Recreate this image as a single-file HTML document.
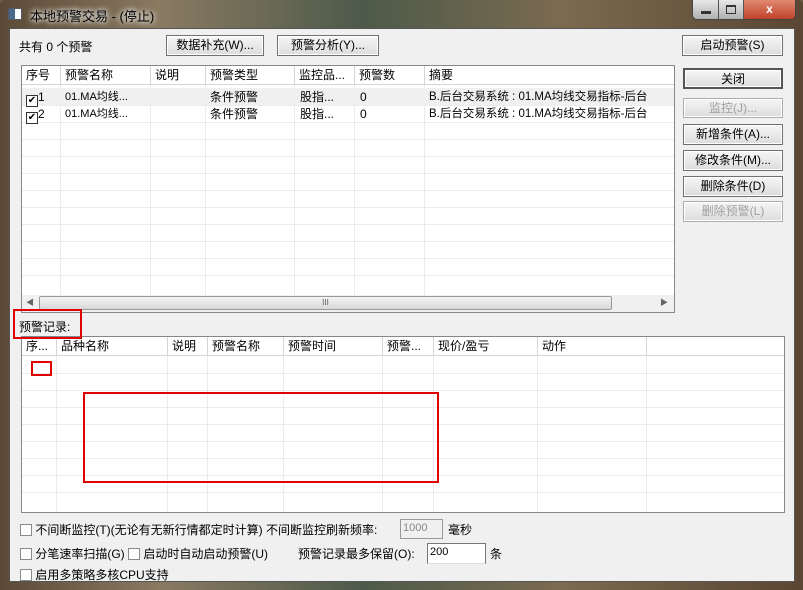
<!DOCTYPE html>
<html><head><meta charset="utf-8"><style>
*{box-sizing:border-box;margin:0;padding:0}
body{width:803px;height:590px;overflow:hidden;background:#6b5a44;font-family:"Liberation Sans","Noto Sans CJK SC",sans-serif;font-size:12px;color:#000;position:relative}
.a{position:absolute}
.frame{left:0;top:0;width:803px;height:590px;background:linear-gradient(90deg,#5b4a36,#8a7a62 20%,#4d5a4a 45%,#7b6a50 70%,#5a4632);border-radius:6px 6px 0 0}
.title{left:30px;top:6px;font-size:13px;color:#000;text-shadow:0 0 6px #fff,0 0 6px #fff}
.client{left:9px;top:28px;width:786px;height:554px;background:#f0f0f0;border:1px solid #555}
.btn{position:absolute;background:linear-gradient(#f6f6f6,#dcdcdc);border:1px solid #707070;box-shadow:inset 0 0 0 1px #fff;text-align:center;line-height:18px;font-size:12px}
.dis{color:#a0a0a0;border-color:#adadad}
.list{background:#fff;border:1px solid #828790}
.hd{position:absolute;top:0;height:19px;line-height:18px;border-right:1px solid #d5d5d5;padding-left:4px;white-space:nowrap;overflow:hidden;border-bottom:1px solid #d5d5d5}
.row{position:absolute;left:0;height:17px;line-height:17px;white-space:nowrap}
.vl{position:absolute;top:19px;bottom:0;width:1px;background:#ececec}
.hl{position:absolute;left:0;right:0;height:1px;background:#ececec}
.cb{display:inline-block;width:12px;height:12px;border:1px solid #8a8a8a;background:#fff;vertical-align:-2px}
.red{position:absolute;border:2px solid #e00000}
</style></head><body>
<div class="a frame"></div>
<div class="a" style="left:8px;top:8px;width:14px;height:12px;background:#fff;border:1px solid #556"><div style="width:6px;height:10px;background:#4a6a8a"></div></div>
<div class="a title">本地预警交易 - (停止)</div>
<div class="a" style="left:692px;top:0;width:104px;height:20px;border:1px solid #444;border-top:none;border-radius:0 0 5px 5px;overflow:hidden;display:flex">
<div style="width:26px;background:linear-gradient(#e8e8e8,#b0b0b0);border-right:1px solid #555;position:relative"><div style="position:absolute;left:8px;top:11px;width:10px;height:3px;background:#333"></div></div>
<div style="width:25px;background:linear-gradient(#e8e8e8,#b0b0b0);border-right:1px solid #555;position:relative"><div style="position:absolute;left:7px;top:5px;width:10px;height:9px;border:1px solid #333;border-top-width:2px"></div></div>
<div style="flex:1;background:linear-gradient(#e08a70,#c0402a);color:#fff;text-align:center;font-weight:bold;line-height:18px">x</div></div>
<div class="a client"></div>
<div class="a" style="left:19px;top:38px">共有 0 个预警</div>
<div class="btn" style="left:166px;top:35px;width:98px;height:21px">数据补充(W)...</div>
<div class="btn" style="left:277px;top:35px;width:102px;height:21px">预警分析(Y)...</div>
<div class="btn" style="left:682px;top:35px;width:101px;height:21px">启动预警(S)</div>
<div class="btn" style="left:683px;top:68px;width:100px;height:21px;border:2px solid #555">关闭</div>
<div class="btn dis" style="left:683px;top:98px;width:100px;height:20px">监控(J)...</div>
<div class="btn" style="left:683px;top:124px;width:100px;height:21px">新增条件(A)...</div>
<div class="btn" style="left:683px;top:150px;width:100px;height:21px">修改条件(M)...</div>
<div class="btn" style="left:683px;top:176px;width:100px;height:21px">删除条件(D)</div>
<div class="btn dis" style="left:683px;top:201px;width:100px;height:21px">删除预警(L)</div>

<div class="a list" style="left:21px;top:65px;width:654px;height:248px;overflow:hidden">
<div class="hd" style="left:0;width:39px">序号</div>
<div class="hd" style="left:39px;width:90px">预警名称</div>
<div class="hd" style="left:129px;width:55px">说明</div>
<div class="hd" style="left:184px;width:89px">预警类型</div>
<div class="hd" style="left:273px;width:60px">监控品...</div>
<div class="hd" style="left:333px;width:70px">预警数</div>
<div class="hd" style="left:403px;width:251px;border-right:none">摘要</div>
<div class="vl" style="left:38px"></div><div class="vl" style="left:128px"></div><div class="vl" style="left:183px"></div><div class="vl" style="left:272px"></div><div class="vl" style="left:332px"></div><div class="vl" style="left:402px"></div>
<div class="hl" style="top:39px"></div><div class="hl" style="top:56px"></div><div class="hl" style="top:73px"></div><div class="hl" style="top:90px"></div><div class="hl" style="top:107px"></div><div class="hl" style="top:124px"></div><div class="hl" style="top:141px"></div><div class="hl" style="top:158px"></div><div class="hl" style="top:175px"></div><div class="hl" style="top:192px"></div><div class="hl" style="top:209px"></div>
<div class="row" style="top:22px;width:654px;background:#f0f0f0"></div>
<div class="row" style="top:23px;left:4px"><span class="cb" style="border-color:#333;font-size:10px;line-height:10px;text-align:center">✔</span>1</div>
<div class="row" style="top:40px;left:4px"><span class="cb" style="border-color:#333;font-size:10px;line-height:10px;text-align:center">✔</span>2</div>
<div class="row" style="top:23px;left:43px;font-size:11px">01.MA均线...</div><div class="row" style="top:40px;left:43px;font-size:11px">01.MA均线...</div>
<div class="row" style="top:23px;left:188px">条件预警</div><div class="row" style="top:40px;left:188px">条件预警</div>
<div class="row" style="top:23px;left:278px">股指...</div><div class="row" style="top:40px;left:278px">股指...</div>
<div class="row" style="top:23px;left:338px">0</div><div class="row" style="top:40px;left:338px">0</div>
<div class="row" style="top:23px;left:407px;font-size:11.5px">B.后台交易系统 : 01.MA均线交易指标-后台</div>
<div class="row" style="top:40px;left:407px;font-size:11.5px">B.后台交易系统 : 01.MA均线交易指标-后台</div>
<div style="position:absolute;left:0;top:229px;width:652px;height:17px;background:#f0f0f0">
<div style="position:absolute;left:17px;top:1px;width:573px;height:14px;border:1px solid #999;border-radius:2px;background:linear-gradient(#f4f4f4,#d8d8d8);text-align:center;font-size:8px;line-height:12px;color:#555">III</div>
<div style="position:absolute;left:4px;top:2px;font-size:8px;color:#666">◀</div><div style="position:absolute;right:6px;top:2px;font-size:8px;color:#666">▶</div></div>
</div>

<div class="a" style="left:19px;top:318px">预警记录:</div>
<div class="a list" style="left:21px;top:336px;width:764px;height:177px;overflow:hidden">
<div class="hd" style="left:0;width:35px">序...</div>
<div class="hd" style="left:35px;width:111px">品种名称</div>
<div class="hd" style="left:146px;width:40px">说明</div>
<div class="hd" style="left:186px;width:76px">预警名称</div>
<div class="hd" style="left:262px;width:99px">预警时间</div>
<div class="hd" style="left:361px;width:51px">预警...</div>
<div class="hd" style="left:412px;width:104px">现价/盈亏</div>
<div class="hd" style="left:516px;width:109px">动作</div>
<div class="hd" style="left:625px;width:139px;border-right:none"></div>
<div class="vl" style="left:34px"></div><div class="vl" style="left:145px"></div><div class="vl" style="left:185px"></div><div class="vl" style="left:261px"></div><div class="vl" style="left:360px"></div><div class="vl" style="left:411px"></div><div class="vl" style="left:515px"></div><div class="vl" style="left:624px"></div>
<div class="hl" style="top:36px"></div><div class="hl" style="top:53px"></div><div class="hl" style="top:70px"></div><div class="hl" style="top:87px"></div><div class="hl" style="top:104px"></div><div class="hl" style="top:121px"></div><div class="hl" style="top:138px"></div><div class="hl" style="top:155px"></div>
</div>
<div class="red" style="left:13px;top:309px;width:69px;height:30px"></div>
<div class="red" style="left:31px;top:361px;width:21px;height:15px"></div>
<div class="red" style="left:83px;top:392px;width:356px;height:91px"></div>

<div class="a" style="left:20px;top:521px"><span class="cb"></span> 不间断监控(T)(无论有无新行情都定时计算) 不间断监控刷新频率:</div>
<div class="a" style="left:400px;top:519px;width:43px;height:20px;border:1px solid #999;background:#f0f0f0;color:#888;font-size:11px;padding-left:2px;line-height:16px">1000</div>
<div class="a" style="left:448px;top:521px">毫秒</div>
<div class="a" style="left:20px;top:545px"><span class="cb"></span> 分笔速率扫描(G) <span class="cb"></span> 启动时自动启动预警(U)</div>
<div class="a" style="left:298px;top:545px">预警记录最多保留(O):</div>
<div class="a" style="left:427px;top:543px;width:59px;height:21px;border:1px solid #777;border-bottom-color:#ddd;background:#fff;font-size:11px;padding-left:2px;line-height:16px">200</div>
<div class="a" style="left:490px;top:545px">条</div>
<div class="a" style="left:20px;top:566px"><span class="cb"></span> 启用多策略多核CPU支持</div>
</body></html>
